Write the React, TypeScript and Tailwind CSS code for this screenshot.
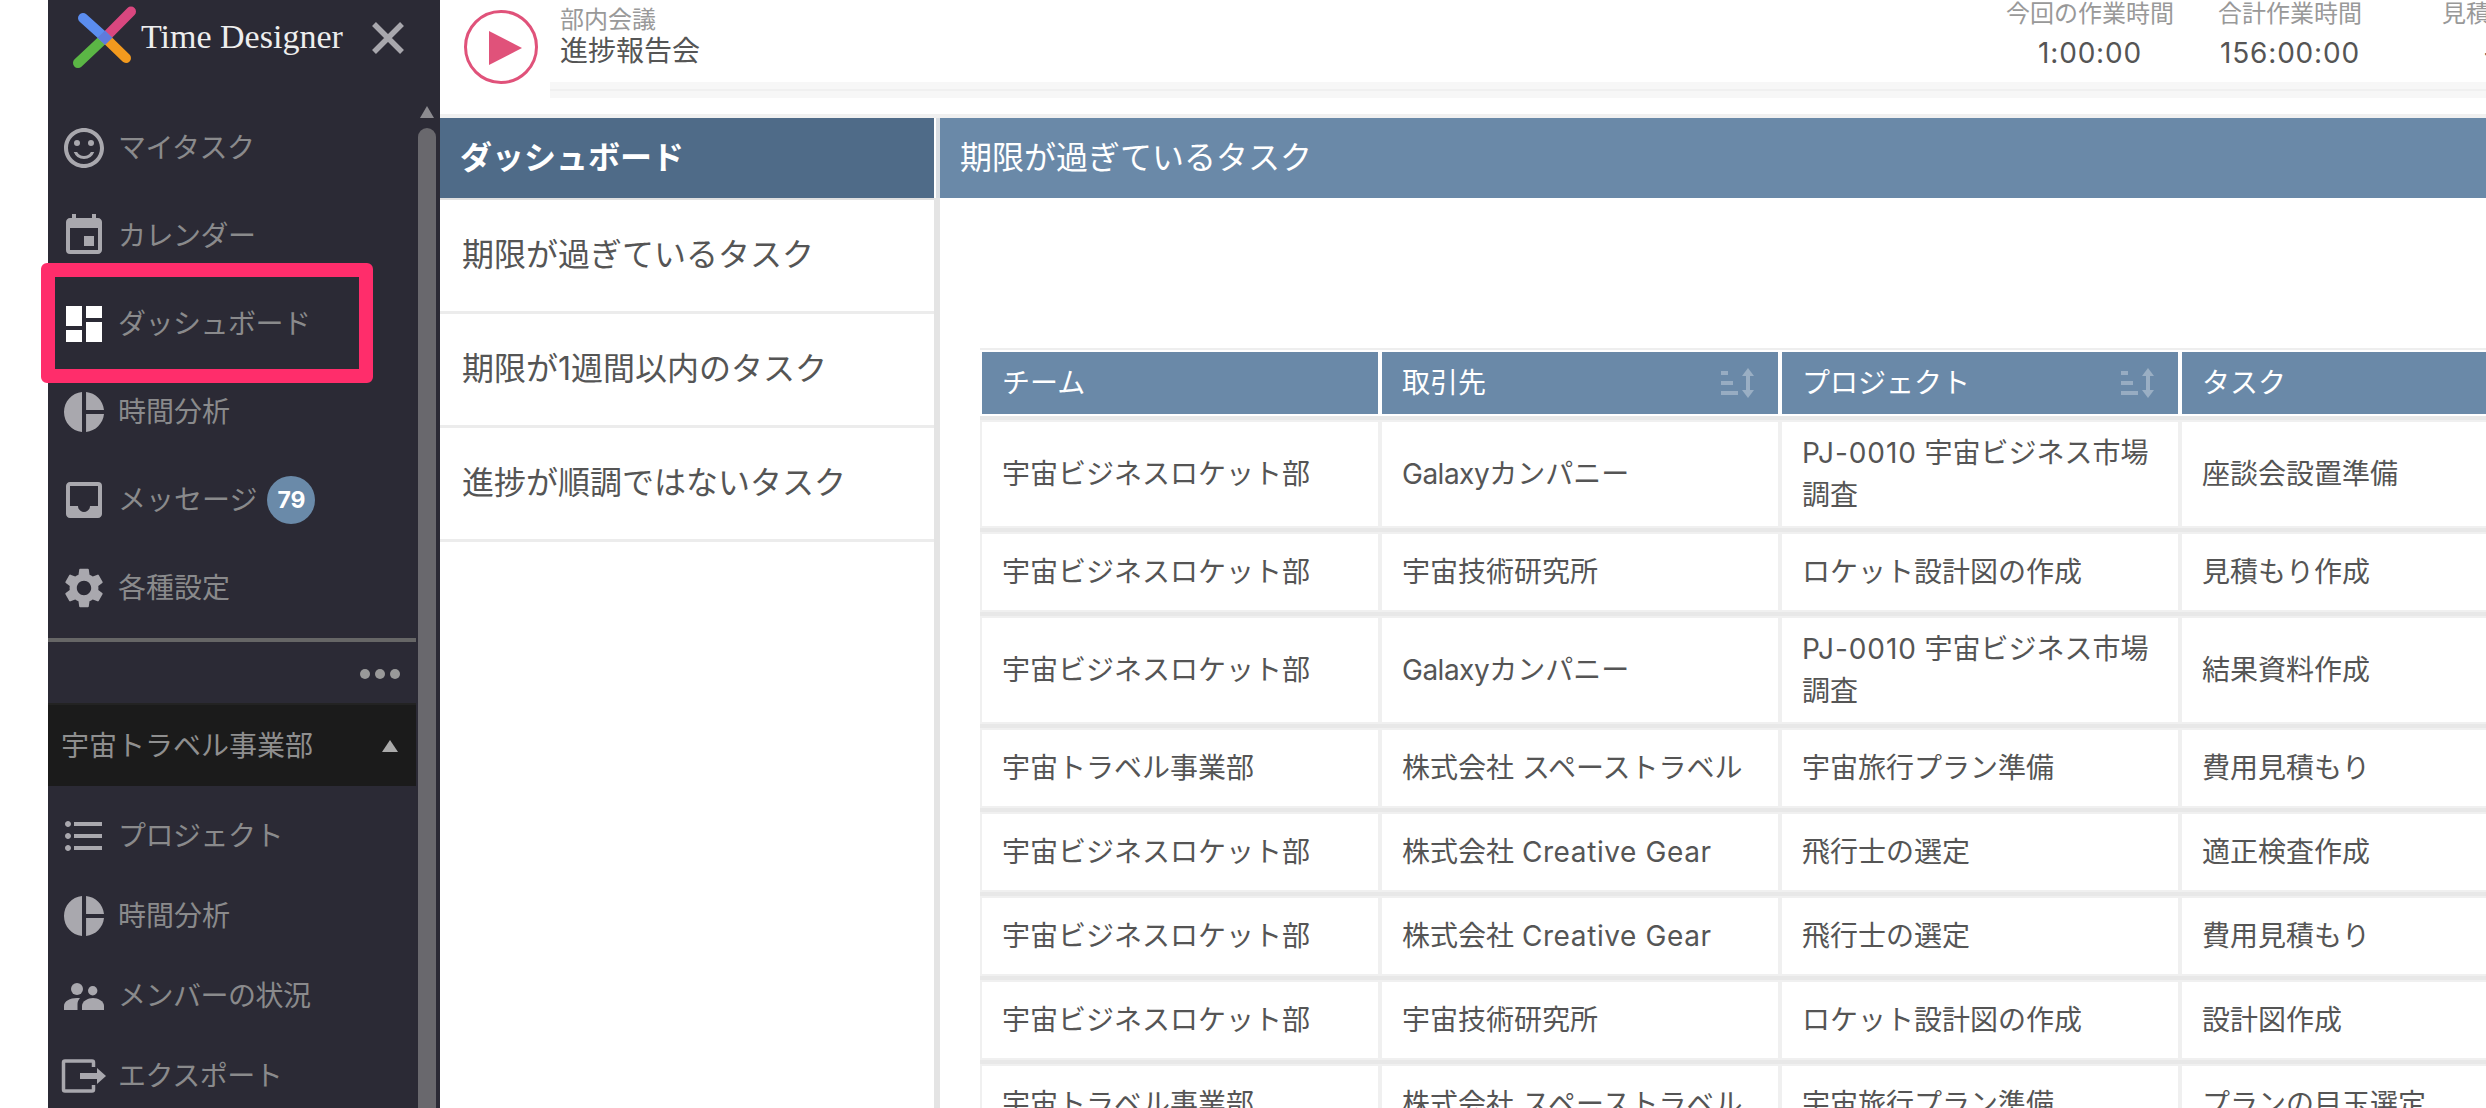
import React from "react";
import {
  MdOutlineSentimentSatisfiedAlt,
  MdEvent,
  MdDashboard,
  MdPieChart,
  MdInbox,
  MdSettings,
  MdFormatListBulleted,
} from "react-icons/md";

function Logo() {
  return (
    <svg width="72" height="72" viewBox="0 0 72 72" className="shrink-0">
      <line x1="61" y1="9.5" x2="35" y2="35.7" stroke="#d9477f" strokeWidth="10" strokeLinecap="round" />
      <line x1="8" y1="61" x2="35" y2="35.7" stroke="#5bb645" strokeWidth="10" strokeLinecap="round" />
      <line x1="13" y1="16" x2="35" y2="35.7" stroke="#5b8def" strokeWidth="10" strokeLinecap="round" />
      <line x1="56" y1="56" x2="35" y2="35.7" stroke="#f39a1e" strokeWidth="10" strokeLinecap="round" />
      <polygon points="35,28.5 42.5,35.7 35,43 27.5,35.7" fill="#5f7bdc" />
    </svg>
  );
}

function PeopleIcon() {
  return (
    <svg width="48" height="48" viewBox="0 0 48 48" fill="#a9a8ae">
      <circle cx="17" cy="17" r="6" />
      <circle cx="32.7" cy="18.7" r="4.7" />
      <path d="M4 38v-4c0-5 6-8 13-8 1 0 2 0 3 .2-2 2-2.5 4-2.5 6V38z" />
      <path d="M22 38v-4c0-5 6-8 11-8s11 3 11 8v4z" />
    </svg>
  );
}

function ExportIcon() {
  return (
    <svg width="48" height="48" viewBox="0 0 48 48">
      <path
        d="M33.5 15v-4.500a1.500 1.500 0 0 0-1.500-1.500H5a1.500 1.500 0 0 0-1.500 1.500v27a1.500 1.500 0 0 0 1.500 1.500h27a1.500 1.500 0 0 0 1.500-1.500V33"
        fill="none"
        stroke="#a9a8ae"
        strokeWidth="3.500"
      />
      <path d="M20 21h17v-5l9 8-9 8v-5H20z" fill="#a9a8ae" />
    </svg>
  );
}

function SortIcon() {
  return (
    <svg width="35" height="30" viewBox="0 0 35 30" className="shrink-0">
      <rect x="1" y="3" width="7" height="4" fill="#ffffff" fillOpacity="0.3" />
      <rect x="1" y="13" width="12" height="4" fill="#ffffff" fillOpacity="0.3" />
      <rect x="1" y="23" width="17" height="4" fill="#ffffff" fillOpacity="0.3" />
      <path d="M28 0l6 8h-4v14h4l-6 8-6-8h4V8h-4z" fill="#ffffff" fillOpacity="0.32" />
    </svg>
  );
}

function NavItem({ icon, label, badge, active, h, tight }: { icon: React.ReactNode; label: string; badge?: string; active?: boolean; h: string; tight?: boolean }) {
  return (
    <div className={`flex items-center gap-[10px] pl-[12px] ${h}`}>
      <span className={`flex w-[48px] h-[48px] items-center justify-center shrink-0 ${active ? "text-white" : "text-[#a9a8ae]"}`}>{icon}</span>
      <span className={`text-[28px] text-[#8a8a8c] ${tight ? "tracking-[-0.5px]" : ""}`}>{label}</span>
      {badge && (
        <span className="flex w-[48px] h-[48px] items-center justify-center rounded-full bg-[#6a8aa9] text-[23px] font-bold text-white">
          {badge}
        </span>
      )}
    </div>
  );
}

function Sidebar() {
  return (
    <aside className="relative flex w-[392px] shrink-0 flex-col bg-[#2b2a35]">
      <div className="flex h-[104px] shrink-0 items-start pl-[22px] pt-[2px]">
        <Logo />
        <span className="-ml-[1px] mt-[12px] font-['Liberation_Serif',serif] text-[34px] leading-[46px] text-[#eeeeee]">Time Designer</span>
        <svg width="32" height="32" viewBox="0 0 32 32" className="ml-[29px] mt-[20px] shrink-0">
          <path d="M2 2l28 28M30 2L2 30" stroke="#a8a7ad" strokeWidth="5.500" />
        </svg>
      </div>
      <div className="flex min-h-0 flex-1">
        <div className="w-[368px] shrink-0">
          <NavItem h="h-[88px]" tight label="マイタスク" icon={<MdOutlineSentimentSatisfiedAlt size={48} />} />
          <NavItem h="h-[88px]" tight label="カレンダー" icon={<MdEvent size={48} />} />
          <NavItem h="h-[88px]" tight active label="ダッシュボード" icon={<MdDashboard size={48} />} />
          <NavItem h="h-[88px]" label="時間分析" icon={<MdPieChart size={48} />} />
          <NavItem h="h-[88px]" label="メッセージ" badge="79" icon={<MdInbox size={48} />} />
          <NavItem h="h-[88px]" label="各種設定" icon={<MdSettings size={48} />} />
          <div className="mt-[6px] h-[4px] bg-[#666666]" />
          <div className="flex h-[61px] items-center justify-end gap-[5px] pr-[16px] pt-[2px]">
            <span className="h-[10px] w-[10px] rounded-full bg-[#999999]" />
            <span className="h-[10px] w-[10px] rounded-full bg-[#999999]" />
            <span className="h-[10px] w-[10px] rounded-full bg-[#999999]" />
          </div>
          <div className="flex h-[83px] items-center justify-between border-t-2 border-[#232323] bg-[#1b1b1b] pl-[13px] pr-[18px]">
            <span className="text-[28px] text-[#8f8f8f]">宇宙トラベル事業部</span>
            <span className="h-0 w-0 border-x-[8px] border-b-[12px] border-x-transparent border-b-[#aaaaaa]" />
          </div>
          <div className="pt-[10px]">
            <NavItem h="h-[80px]" tight label="プロジェクト" icon={<MdFormatListBulleted size={48} />} />
            <NavItem h="h-[80px]" label="時間分析" icon={<MdPieChart size={48} />} />
            <NavItem h="h-[80px]" tight label="メンバーの状況" icon={<PeopleIcon />} />
            <NavItem h="h-[80px]" tight label="エクスポート" icon={<ExportIcon />} />
          </div>
        </div>
        <div className="flex w-[24px] flex-col items-center pl-[2px] pr-[4px] pt-[2px]">
          <span className="h-0 w-0 border-x-[7px] border-b-[12px] border-x-transparent border-b-[#8c8b90]" />
          <div className="mt-[10px] w-[18px] flex-1 rounded-t-[9px] bg-[#69686d]" />
        </div>
      </div>
      <div className="absolute left-[-7px] top-[263px] h-[120px] w-[332px] rounded-[6px] border-[14px] border-[#ff2d6b]" />
    </aside>
  );
}

function Stat({ label, value }: { label: string; value: string }) {
  return (
    <div className="flex w-[200px] shrink-0 flex-col items-center">
      <span className="mt-[-1px] text-[24px] leading-[30px] text-[#999999]">{label}</span>
      <span className="mt-[5px] text-[28px] leading-[38px] tracking-[0.8px] text-[#555555]">{value}</span>
    </div>
  );
}

function TopBar() {
  return (
    <div className="flex h-[118px] shrink-0 border-b-4 border-[#f0f0f0] bg-white">
      <div className="w-[110px] shrink-0 pl-[24px] pt-[10px]">
        <div className="relative h-[74px] w-[74px] rounded-full border-[3px] border-[#e0527a]">
          <span className="absolute left-[22px] top-[18px] h-0 w-0 border-y-[17px] border-l-[33px] border-y-transparent border-l-[#e0527a]" />
        </div>
      </div>
      <div className="min-w-0 flex-1">
        <div className="flex h-[82px]">
          <div className="w-[200px] shrink-0 pl-[10px] pt-[5px]">
            <div className="text-[24px] leading-[30px] text-[#999999]">部内会議</div>
            <div className="mt-[1px] text-[28px] leading-[30px] text-[#555555]">進捗報告会</div>
          </div>
          <div className="ml-[1240px] flex shrink-0">
            <Stat label="今回の作業時間" value="1:00:00" />
            <Stat label="合計作業時間" value="156:00:00" />
            <Stat label="見積時間" value="-" />
          </div>
        </div>
        <div className="flex h-[16px] items-center bg-[#f7f7f7]">
          <div className="h-[2px] w-full bg-[#f0f0f0]" />
        </div>
      </div>
    </div>
  );
}

function LeftPanel() {
  const items = ["期限が過ぎているタスク", "期限が1週間以内のタスク", "進捗が順調ではないタスク"];
  return (
    <div className="w-[494px] shrink-0 bg-white">
      <div className="flex h-[82px] items-center border-b-2 border-[#e0e0e0] bg-[#4f6b88] pl-[20px] text-[32px] font-bold text-white">
        ダッシュボード
      </div>
      {items.map((t) => (
        <div key={t} className="flex h-[114px] items-center border-b-[3px] border-[#ececec] pb-[1px] pl-[22px] text-[32px] text-[#555555]">
          {t}
        </div>
      ))}
    </div>
  );
}

const P1 = (
  <>
    <span className="tracking-[0.9px]">PJ-0010</span> 宇宙ビジネス市場調査
  </>
);
const GALAXY = (
  <>
    <span className="tracking-[-0.5px]">Galaxy</span>カンパニー
  </>
);
const GEAR = (
  <>
    株式会社 <span className="tracking-[0.6px]">Creative Gear</span>
  </>
);
const ROCKET = "宇宙ビジネスロケット部";
const TRAVEL = "宇宙トラベル事業部";
const rows: React.ReactNode[][] = [
  [ROCKET, GALAXY, P1, "座談会設置準備"],
  [ROCKET, "宇宙技術研究所", "ロケット設計図の作成", "見積もり作成"],
  [ROCKET, GALAXY, P1, "結果資料作成"],
  [TRAVEL, "株式会社 スペーストラベル", "宇宙旅行プラン準備", "費用見積もり"],
  [ROCKET, GEAR, "飛行士の選定", "適正検査作成"],
  [ROCKET, GEAR, "飛行士の選定", "費用見積もり"],
  [ROCKET, "宇宙技術研究所", "ロケット設計図の作成", "設計図作成"],
  [TRAVEL, "株式会社 スペーストラベル", "宇宙旅行プラン準備", "プランの目玉選定"],
];

function HeadCell({ label, sort }: { label: string; sort?: boolean }) {
  return (
    <div className="flex h-[62px] w-[396px] shrink-0 items-center justify-between bg-[#6a89a8] pl-[20px] pr-[23px] text-[28px] text-white">
      <span>{label}</span>
      {sort && <SortIcon />}
    </div>
  );
}

function DataTable() {
  return (
    <div className="ml-[40px] mt-[150px] w-[1640px]">
      <div className="h-[2px] bg-[#eeeeee]" />
      <div className="flex gap-[4px] bg-white py-[2px] pl-[2px]">
        <HeadCell label="チーム" />
        <HeadCell label="取引先" sort />
        <HeadCell label="プロジェクト" sort />
        <HeadCell label="タスク" />
      </div>
      <div className="h-[6px] border-b-2 border-[#f0f0f0] bg-[#e8e8e8]" />
      {rows.map((r, i) => (
        <div key={i}>
          <div className="flex gap-[4px] bg-[#f0f0f0] pl-[2px]">
            {r.map((c, j) => (
              <div key={j} className="flex min-h-[76px] w-[396px] shrink-0 items-center bg-white px-[20px] py-[10px] text-[28px] leading-[42px] text-[#555555]">
                <span>{c}</span>
              </div>
            ))}
          </div>
          <div className="h-[8px] border-y-2 border-[#f0f0f0] bg-[#e8e8e8]" />
        </div>
      ))}
    </div>
  );
}

function RightPanel() {
  return (
    <div className="min-w-0 flex-1 overflow-hidden bg-white">
      <div className="flex h-[80px] items-center bg-[#6a89a8] pl-[20px] text-[32px] text-white">期限が過ぎているタスク</div>
      <DataTable />
    </div>
  );
}

export default function App() {
  return (
    <div className="flex h-[1108px] w-[2486px] overflow-hidden bg-white font-['Inter','Noto_Sans_CJK_JP',sans-serif]">
      <div className="w-[48px] shrink-0" />
      <Sidebar />
      <main className="flex min-w-0 flex-1 flex-col">
        <TopBar />
        <div className="flex min-h-0 flex-1">
          <LeftPanel />
          <div className="flex w-[6px] shrink-0 flex-col">
            <div className="h-[80px] border-l-2 border-white bg-[#d8dde2]" />
            <div className="flex-1 bg-[#e4e4e4]" />
          </div>
          <RightPanel />
        </div>
      </main>
    </div>
  );
}
